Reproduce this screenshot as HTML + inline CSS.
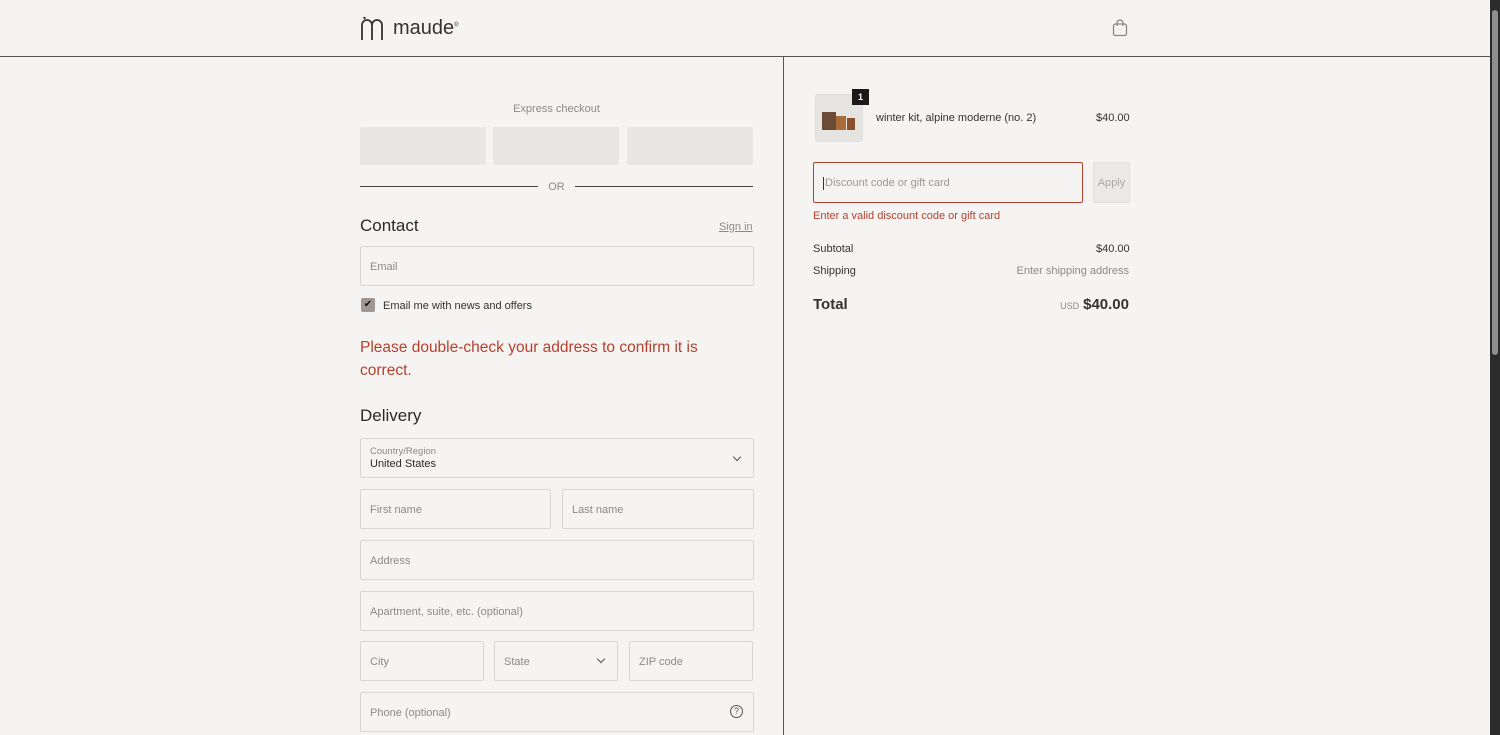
<!DOCTYPE html>
<html><head><meta charset="utf-8"><style>
*{box-sizing:border-box;margin:0;padding:0}
body{width:1500px;height:735px;overflow:hidden;background:#f5f4f2;font-family:"Liberation Sans",sans-serif;color:#2a2a2a;position:relative}
.a{position:absolute}
.inp{position:absolute;border:1px solid #d9d7d3;border-radius:2px;background:#f5f4f2;font-size:11px;color:#8a8a8a;padding-left:9px;padding-top:1px;display:flex;align-items:center}
.exp{position:absolute;top:127px;width:126px;height:38px;background:#e8e7e4;border-radius:2px}
.chev{position:absolute;width:6px;height:6px;border-right:1.2px solid #555;border-bottom:1.2px solid #555;transform:rotate(45deg)}
</style></head><body>
<div class="a" style="left:0;top:56px;width:1490px;height:1px;background:#555"></div>
<div class="a" style="left:783px;top:57px;width:1px;height:678px;background:#555"></div>
<div class="a" style="left:1490px;top:0;width:10px;height:735px;background:#2b2b2b"></div>
<div class="a" style="left:1492px;top:10px;width:6px;height:345px;background:#8e8e8e;border-radius:3px"></div>
<svg class="a" style="left:360px;top:16px" width="24" height="24" viewBox="0 0 24 24"><path d="M2 24V9a5 5 0 0 1 10 0v15M12 9a5 5 0 0 1 10 0v15" fill="none" stroke="#333" stroke-width="1.8"/><circle cx="4.5" cy="2" r="1.2" fill="#333"/></svg>
<div class="a" style="left:393px;top:17px;font-size:20px;color:#333">maude<sup style="font-size:6px">®</sup></div>
<svg class="a" style="left:1112px;top:19px" width="16" height="18" viewBox="0 0 16 18"><rect x="1.5" y="5" width="13" height="11.5" rx="2" fill="none" stroke="#888" stroke-width="1.3"/><path d="M5 7V4a3 3 0 0 1 6 0v3" fill="none" stroke="#888" stroke-width="1.3"/></svg>
<div class="a" style="left:360px;top:103px;width:393px;text-align:center;font-size:11px;color:#8a8a8a">Express checkout</div>
<div class="exp" style="left:360px"></div><div class="exp" style="left:493px"></div><div class="exp" style="left:627px"></div>
<div class="a" style="left:360px;top:186px;width:178px;height:1px;background:#444"></div>
<div class="a" style="left:575px;top:186px;width:178px;height:1px;background:#444"></div>
<div class="a" style="left:540px;top:181px;width:33px;text-align:center;font-size:11px;color:#8a8a8a">OR</div>
<div class="a" style="left:360px;top:216px;font-size:17px;color:#2a2a2a">Contact</div>
<div class="a" style="left:719px;top:221px;font-size:11px;color:#8a8a8a;text-decoration:underline">Sign in</div>
<div class="inp" style="left:360px;top:246px;width:394px;height:40px">Email</div>
<div class="a" style="left:361px;top:298px;width:14px;height:14px;background:#a09890;border-radius:2px;color:#111;font-size:10px;text-align:center;line-height:14px">✔</div>
<div class="a" style="left:383px;top:300px;font-size:11px;color:#333">Email me with news and offers</div>
<div class="a" style="left:360px;top:336px;width:380px;font-size:15.5px;line-height:23px;color:#b5412f">Please double-check your address to confirm it is correct.</div>
<div class="a" style="left:360px;top:406px;font-size:17px">Delivery</div>
<div class="inp" style="left:360px;top:438px;width:394px;height:40px;display:block;padding-top:7px"><div style="font-size:9.5px">Country/Region</div><div style="font-size:11px;color:#2a2a2a;margin-top:1px">United States</div></div>
<div class="chev" style="left:734px;top:454px"></div>
<div class="inp" style="left:360px;top:489px;width:191px;height:40px">First name</div>
<div class="inp" style="left:562px;top:489px;width:192px;height:40px">Last name</div>
<div class="inp" style="left:360px;top:540px;width:394px;height:40px">Address</div>
<div class="inp" style="left:360px;top:591px;width:394px;height:40px">Apartment, suite, etc. (optional)</div>
<div class="inp" style="left:360px;top:641px;width:124px;height:40px">City</div>
<div class="inp" style="left:494px;top:641px;width:124px;height:40px">State</div>
<div class="chev" style="left:598px;top:656px"></div>
<div class="inp" style="left:629px;top:641px;width:124px;height:40px">ZIP code</div>
<div class="inp" style="left:360px;top:692px;width:394px;height:40px">Phone (optional)</div>
<div class="a" style="left:730px;top:705px;width:13px;height:13px;border:1.2px solid #555;border-radius:50%;font-size:9px;text-align:center;line-height:11px;color:#555">?</div>
<div class="a" style="left:815px;top:94px;width:48px;height:48px;border:1px solid #ddd;background:#e6e4e0;border-radius:3px"></div>
<div class="a" style="left:822px;top:112px;width:14px;height:18px;background:#6b4a38"></div>
<div class="a" style="left:836px;top:116px;width:10px;height:14px;background:#a86b3a"></div>
<div class="a" style="left:847px;top:118px;width:8px;height:12px;background:#8a5030"></div>
<div class="a" style="left:852px;top:89px;width:17px;height:16px;background:#1a1a1a;color:#fff;font-size:9px;text-align:center;line-height:16px;font-weight:bold">1</div>
<div class="a" style="left:876px;top:112px;font-size:11px;color:#333">winter kit, alpine moderne (no. 2)</div>
<div class="a" style="left:1096px;top:112px;font-size:11px;color:#333">$40.00</div>
<div class="inp" style="left:813px;top:162px;width:270px;height:41px;border:1.5px solid #b5412f;color:#999"><span style="border-left:1px solid #333;height:13px;margin-right:1px"></span>Discount code or gift card</div>
<div class="a" style="left:1093px;top:162px;width:37px;height:41px;background:#ebe9e6;border:1px solid #e2e0dc;border-radius:2px;font-size:11px;color:#aaa;text-align:center;line-height:40px">Apply</div>
<div class="a" style="left:813px;top:210px;font-size:11px;color:#b5412f">Enter a valid discount code or gift card</div>
<div class="a" style="left:813px;top:243px;font-size:11px;color:#333">Subtotal</div>
<div class="a" style="left:1096px;top:243px;font-size:11px;color:#333">$40.00</div>
<div class="a" style="left:813px;top:265px;font-size:11px;color:#333">Shipping</div>
<div class="a" style="right:371px;top:265px;font-size:11px;color:#8a8a8a">Enter shipping address</div>
<div class="a" style="left:813px;top:296px;font-size:15px;font-weight:bold;color:#333">Total</div>
<div class="a" style="right:371px;top:296px;font-size:15px;font-weight:bold;color:#333"><span style="font-size:9px;font-weight:normal;color:#8a8a8a;margin-right:4px">USD</span>$40.00</div>
</body></html>
